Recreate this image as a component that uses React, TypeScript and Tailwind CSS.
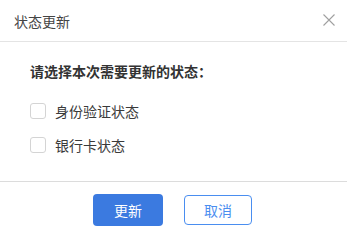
export default function App() {
  return (
    <div className="w-[347px] h-[237px] bg-white text-[#333] font-['Noto_Sans_CJK_SC','Noto_Sans',sans-serif] overflow-hidden">
      {/* header */}
      <div className="h-[42px] flex items-center justify-between pl-[14px] pr-[12px] border-b border-[#e4e4e4]">
        <span className="text-[14px] leading-[20px] text-[#444]">状态更新</span>
        <svg width="12" height="12" viewBox="0 0 12 12" className="mt-[-2px]">
          <path d="M0.5 0.5 L11.5 11.5 M11.5 0.5 L0.5 11.5" stroke="#a0a0a0" strokeWidth="1.1" />
        </svg>
      </div>

      {/* body */}
      <div className="px-[30px] pt-[19px] pb-[26px] border-b border-[#dcdcdc]">
        <div className="text-[14px] leading-[20px] font-bold text-[#333]">请选择本次需要更新的状态：</div>
        <div className="mt-[20px] flex flex-col gap-[14px]">
          {["身份验证状态", "银行卡状态"].map((label) => (
            <label key={label} className="flex items-center h-[20px] gap-[9px] text-[14px] text-[#3a3a3a]">
              <span className="w-[16px] h-[16px] rounded-[3px] border border-[#d4d4d4] bg-white" />
              {label}
            </label>
          ))}
        </div>
      </div>

      {/* footer */}
      <div className="flex items-center justify-center gap-[21px] pt-[12px] pr-[2px]">
        <button className="w-[70px] h-[32px] rounded-[4px] bg-[#3b7ae0] text-white text-[14px]">更新</button>
        <button className="w-[68px] h-[30px] rounded-[4px] border border-[#4a8ef0] bg-white text-[#4a8ef0] text-[14px]">取消</button>
      </div>
    </div>
  );
}
